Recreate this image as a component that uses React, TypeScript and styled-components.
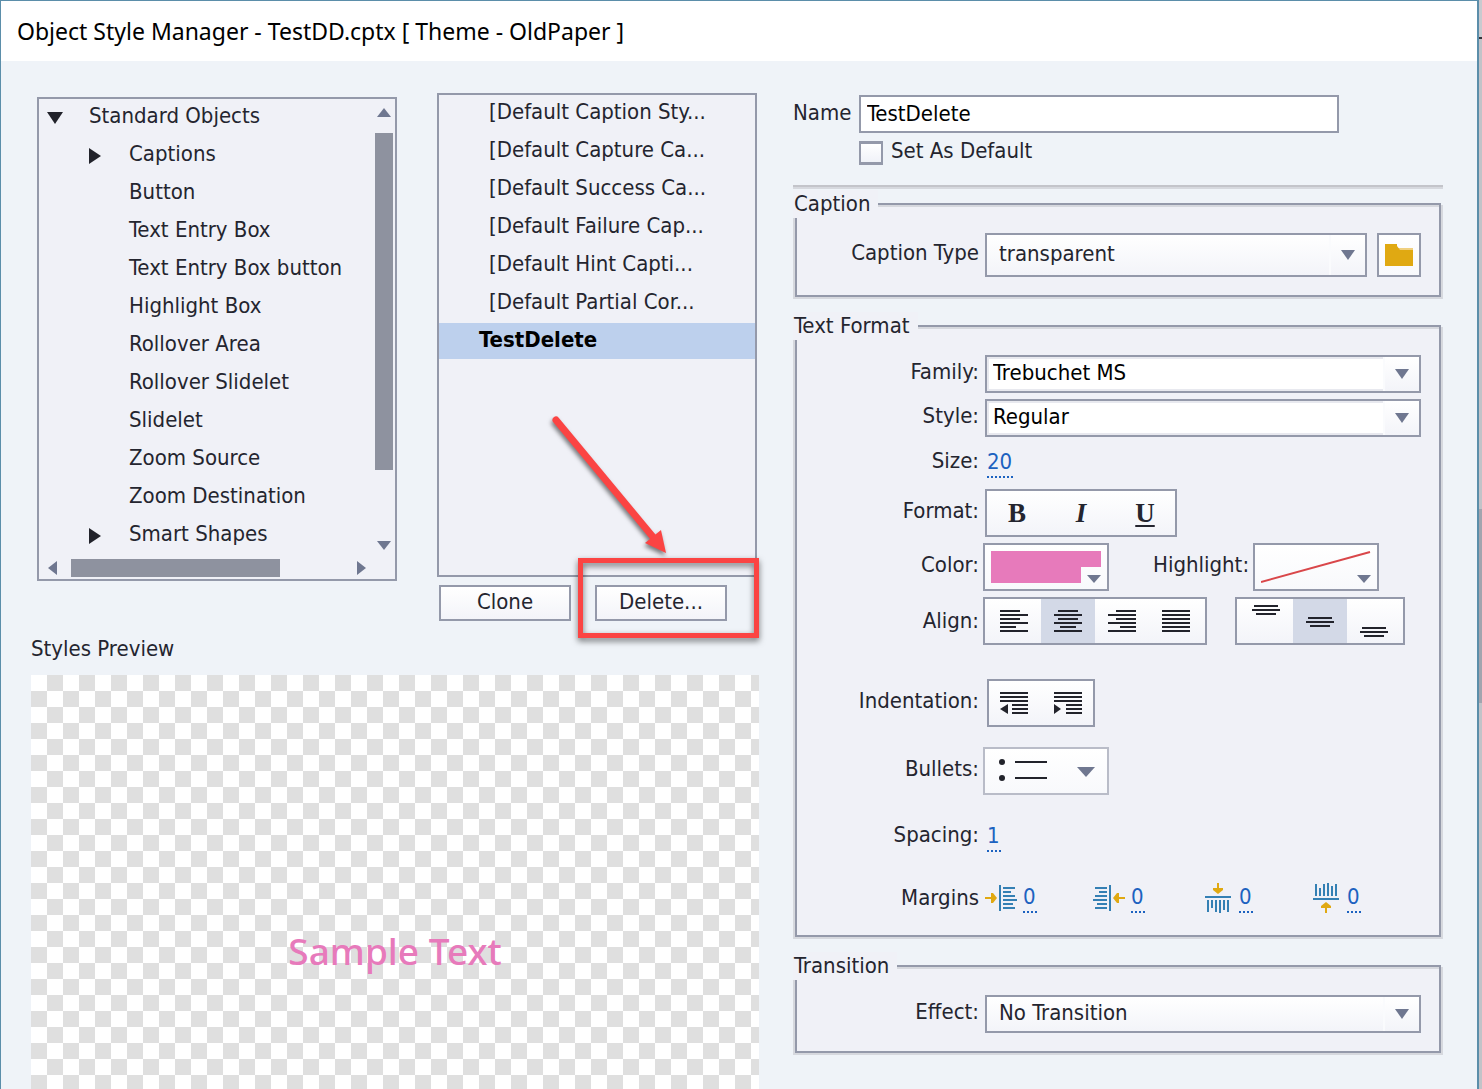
import React, { useState } from 'react';
import styled, { createGlobalStyle } from 'styled-components';

const color = {
  edge: '#5b8eaa',
  line: '#9499aa',
  soft: '#d6d8de',
  panel: '#f0f1f7',
  body: '#eff3f8',
  text: '#24252f',
  arrow: '#6f7790',
  thumb: '#8e929f',
  select: '#bdd0ed',
  pressed: '#d3d9e7',
  link: '#1c62c0',
  pink: '#e77abb',
  red: '#fb4443',
  gold: '#e0a912',
};

const uiFont = '"DejaVu Sans Condensed", "Noto Sans", sans-serif';

const GlobalStyle = createGlobalStyle`
  *, *::before, *::after { box-sizing: border-box; }
  body { margin: 0; background: #c2c3c8; }
  button, input, select { font: inherit; color: inherit; margin: 0; }
  svg { display: block; flex: none; }
`;

/* ---------- window frame ---------- */

const Screen = styled.div`
  display: flex;
  min-height: 100vh;
  font: 22px/28px ${uiFont};
  color: ${color.text};
`;

const Dialog = styled.main`
  flex: 1;
  min-width: 0;
  display: flex;
  flex-direction: column;
  background: ${color.body};
  border: solid ${color.edge};
  border-width: 1px 2px 0 1px;
`;

const Behind = styled.div`
  width: 3px;
  background: linear-gradient(
    #c8cacf 37px, #33343a 37px, #33343a 39px, #c2c3c8 39px,
    #c2c3c8 509px, #a2a4ae 509px, #a2a4ae 703px, #c2c3c8 703px
  );
`;

const TitleBar = styled.h1`
  margin: 0;
  padding: 0 16px;
  background: #fff;
  color: #000;
  font: 400 23px/60px "Noto Sans", sans-serif;
`;

const Columns = styled.div`
  flex: 1;
  display: grid;
  grid-template-columns: minmax(0, 728fr) minmax(0, 650fr);
  column-gap: 34px;
  padding: 32px 34px 0 30px;
`;

const LeftColumn = styled.div`
  display: flex;
  flex-direction: column;
`;

const Lists = styled.div`
  display: grid;
  grid-template-columns: minmax(0, 360fr) minmax(0, 320fr);
  column-gap: 40px;
  padding: 0 2px 0 6px;
  align-items: start;
`;

/* ---------- object tree ---------- */

const Tree = styled.div`
  display: grid;
  grid-template-columns: minmax(0, 1fr) 18px;
  grid-template-rows: minmax(0, 1fr) 18px;
  height: 484px;
  margin-top: 4px;
  padding: 0 2px 2px 0;
  border: 2px solid ${color.line};
  background: ${color.panel};
`;

const TreeItems = styled.ul`
  display: flex;
  flex-direction: column;
  gap: 2px;
  margin: 0;
  padding: 0;
  list-style: none;
  overflow: hidden;
  white-space: nowrap;
`;

const TreeRow = styled.li<{ $level: number }>`
  display: grid;
  grid-template-columns: 40px 1fr;
  align-items: center;
  flex: none;
  height: 36px;
  padding-left: ${p => 10 + p.$level * 40}px;
  padding-bottom: 2px;
`;

const Toggle = styled.button`
  display: flex;
  align-items: center;
  justify-content: center;
  width: 12px;
  height: 24px;
  padding: 4px 0 0;
  border: 0;
  background: none;
`;

const ScrollBar = styled.div<{ $across?: boolean }>`
  display: flex;
  flex-direction: ${p => (p.$across ? 'row' : 'column')};
`;

const ScrollArrow = styled.button<{ $across?: boolean; $end?: boolean }>`
  display: flex;
  flex: 0 0 ${p => (p.$across ? 32 : 34)}px;
  flex-direction: ${p => (p.$across ? 'row' : 'column')};
  align-items: center;
  justify-content: ${p => (p.$end ? 'flex-end' : 'flex-start')};
  padding: ${p => (p.$across ? '0 9px' : '9px 0')};
  border: 0;
  background: none;
`;

const Track = styled.div<{ $across?: boolean }>`
  flex: 1;
  display: flex;
  flex-direction: ${p => (p.$across ? 'row' : 'column')};
`;

const Thumb = styled.div<{ $share: number }>`
  flex: 0 0 ${p => p.$share}%;
  background: ${color.thumb};
`;

/* ---------- style list ---------- */

const StyleList = styled.ul`
  display: flex;
  flex-direction: column;
  gap: 2px;
  height: 484px;
  margin: 0;
  padding: 0;
  list-style: none;
  border: 2px solid ${color.line};
  background: ${color.panel};
  white-space: nowrap;
  overflow: hidden;
`;

const StyleItem = styled.li<{ $current?: boolean }>`
  height: 36px;
  padding-left: ${p => (p.$current ? 40 : 50)}px;
  line-height: 34px;
  ${p => p.$current && `background: ${color.select}; color: #000; font-weight: 700;`}
`;

const Actions = styled.div`
  display: flex;
  gap: 24px;
  padding: 8px 2px 0;
`;

const PushButton = styled.button`
  width: 132px;
  height: 36px;
  padding: 0 0 2px;
  border: 2px solid ${color.line};
  background: linear-gradient(#fff, #f3f4f9);
`;

const Marked = styled.div`
  position: relative;
`;

const MarkBox = styled.div`
  position: absolute;
  left: -17px;
  top: -27px;
  width: 181px;
  height: 80px;
  border: 5px solid ${color.red};
  filter: drop-shadow(0 3px 3px rgba(0, 0, 0, 0.55));
  pointer-events: none;
`;

const MarkArrow = styled.svg`
  position: absolute;
  left: -55px;
  top: -175px;
  filter: drop-shadow(-1px 3px 2px rgba(0, 0, 0, 0.5));
  pointer-events: none;
`;

/* ---------- preview ---------- */

const PreviewTitle = styled.h2`
  margin: 14px 0 12px;
  font: inherit;
`;

const Preview = styled.div`
  flex: 1;
  padding-top: 248px;
  background: repeating-conic-gradient(#dfdfdf 0 25%, #fff 0 50%) 0 0 / 32px 32px;
  color: ${color.pink};
  font: 500 37px/56px "Noto Sans", sans-serif;
  text-align: center;
`;

/* ---------- properties ---------- */

const Properties = styled.form`
  display: flex;
  flex-direction: column;
  padding-top: 2px;
`;

const NameRow = styled.div`
  display: flex;
  padding-right: 104px;
`;

const NameLabel = styled.label`
  width: 66px;
  line-height: 36px;
`;

const NameInput = styled.input`
  flex: 1;
  min-width: 0;
  height: 38px;
  padding: 0 6px 2px;
  border: 2px solid ${color.line};
  border-radius: 0;
  background: #fff;
  color: #000;
`;

const DefaultRow = styled.div`
  display: flex;
  gap: 8px;
  height: 24px;
  margin: 8px 0 20px 66px;
  line-height: 20px;
`;

const Check = styled.input`
  appearance: none;
  width: 24px;
  height: 24px;
  border: solid ${color.line};
  border-width: 3px 2px;
  background: linear-gradient(#fff, #f0f2f8);
`;

const Divider = styled.hr`
  width: 100%;
  height: 4px;
  margin: 0 0 1px;
  border: solid;
  border-width: 2px 0;
  border-color: #c3c4ca ${color.soft} ${color.soft};
`;

const Group = styled.fieldset`
  min-width: 0;
  margin: 0 2px 15px;
  padding: 15px 18px 18px 0;
  border: 2px solid ${color.line};
  background: ${color.panel};
  box-shadow: 2px 2px 0 ${color.soft}, -2px 2px 0 ${color.soft}, inset 0 2px 0 ${color.soft};
`;

const Legend = styled.legend`
  margin-left: -4px;
  padding: 0 8px 0 1px;
  background: ${color.panel};
`;

const Row = styled.div<{ $lead: number; $space?: number; $min?: number }>`
  display: grid;
  grid-template-columns: 182px minmax(0, 1fr);
  column-gap: ${p => p.$lead}px;
  align-items: center;
  min-height: ${p => p.$min ?? 38}px;
  margin-top: ${p => p.$space ?? 0}px;
`;

const RowLabel = styled.label<{ $level?: boolean }>`
  padding-bottom: ${p => (p.$level ? 0 : 4)}px;
  text-align: right;
  white-space: nowrap;
`;

const SideLabel = styled(RowLabel)`
  margin: 0 4px 0 44px;
`;

const Controls = styled.div<{ $gap?: number }>`
  display: flex;
  align-items: center;
  gap: ${p => p.$gap ?? 0}px;
`;

const SelectBox = styled.div<{ $height: number; $field?: boolean }>`
  position: relative;
  flex: 1;
  min-width: 0;
  height: ${p => p.$height}px;
  border: 2px solid ${color.line};
  background: linear-gradient(#fff, #f3f4f9);

  select {
    appearance: none;
    width: 100%;
    height: 100%;
    padding: 0 38px 2px ${p => (p.$field ? 6 : 12)}px;
    border: 0;
    border-radius: 0;
    background: ${p => (p.$field ? '#fff' : 'transparent')};
    box-shadow: ${p => (p.$field ? 'inset 0 0 0 2px #e8e9ef' : 'none')};
    ${p => p.$field && 'color: #000;'}
  }
`;

const DropArrow = styled.span`
  position: absolute;
  top: 0;
  right: 0;
  display: flex;
  align-items: center;
  justify-content: center;
  width: 36px;
  height: 100%;
  border-left: 2px solid #fafbfd;
  background: linear-gradient(#fff, #f3f4f9);
  pointer-events: none;
`;

const IconButton = styled.button<{ $width: number; $pale?: boolean }>`
  display: flex;
  align-items: center;
  justify-content: center;
  width: ${p => p.$width}px;
  height: ${p => (p.$width > 50 ? 48 : 44)}px;
  padding: 0;
  border: 2px solid ${p => (p.$pale ? '#b9bcc8' : color.line)};
  background: linear-gradient(#fff, #f8f9fc);
`;

const ToolGroup = styled.div<{ $spread?: boolean }>`
  display: flex;
  gap: ${p => (p.$spread ? 4 : 0)}px;
  height: 48px;
  padding: 0 ${p => (p.$spread ? 0 : 2)}px;
  border: 2px solid ${color.line};
  background: linear-gradient(#fff, #f3f4f9);
`;

const Tool = styled.button<{ $width: number; $on?: boolean }>`
  display: flex;
  align-items: center;
  justify-content: center;
  width: ${p => p.$width}px;
  padding: 0;
  border: 0;
  background: ${p => (p.$on ? color.pressed : 'transparent')};
`;

const Letter = styled.span<{ $kind: 'B' | 'I' | 'U' }>`
  font: 700 27px/36px "Liberation Serif", serif;
  font-style: ${p => (p.$kind === 'I' ? 'italic' : 'normal')};
  text-decoration: ${p => (p.$kind === 'U' ? 'underline 2px' : 'none')};
  text-underline-offset: 3px;
`;

const HotText = styled.input<{ $wide?: boolean }>`
  width: ${p => (p.$wide ? 26 : 14)}px;
  height: 30px;
  padding: 0 0 4px;
  border: 0;
  border-radius: 0;
  color: ${color.link};
  background: repeating-linear-gradient(90deg, ${color.link} 0 2px, transparent 2px 4px) left bottom / 100% 2px no-repeat;
`;

const Margin = styled.div`
  display: flex;
  align-items: center;
  gap: 6px;
  width: 108px;
`;

/* ---------- drawings ---------- */

type Dir = 'up' | 'down' | 'left' | 'right';

const shapes: Record<Dir, (l: number, d: number) => string> = {
  up: (l, d) => `0,${d} ${l},${d} ${l / 2},0`,
  down: (l, d) => `0,0 ${l},0 ${l / 2},${d}`,
  left: (l, d) => `${d},0 ${d},${l} 0,${l / 2}`,
  right: (l, d) => `0,0 0,${l} ${d},${l / 2}`,
};

function Triangle({ dir, long, deep, fill = color.arrow }: { dir: Dir; long: number; deep: number; fill?: string }) {
  const upright = dir === 'up' || dir === 'down';
  return (
    <svg width={upright ? long : deep} height={upright ? deep : long} aria-hidden="true">
      <polygon points={shapes[dir](long, deep)} fill={fill} />
    </svg>
  );
}

type Bar = [number, number];

function Bars({ rows, top = 0, height = 22 }: { rows: Bar[]; top?: number; height?: number }) {
  return (
    <svg width="28" height={height} aria-hidden="true">
      {rows.map(([from, to], i) => (
        <rect key={i} x={from} y={top + i * 4} width={to - from} height="2" fill="#22232b" />
      ))}
    </svg>
  );
}

const alignBars: { name: string; rows: Bar[] }[] = [
  { name: 'Align left', rows: [[0, 20], [0, 28], [0, 20], [0, 28], [0, 16], [0, 28]] },
  { name: 'Align centre', rows: [[4, 24], [0, 28], [4, 24], [0, 28], [6, 22], [0, 28]] },
  { name: 'Align right', rows: [[8, 28], [0, 28], [8, 28], [0, 28], [12, 28], [0, 28]] },
  { name: 'Justify', rows: [[0, 28], [0, 28], [0, 28], [0, 28], [0, 28], [0, 28]] },
];

const shortBars: Bar[] = [[2, 26], [0, 28], [4, 24]];
const verticals = [
  { name: 'Align top', top: 6 },
  { name: 'Align middle', top: 18 },
  { name: 'Align bottom', top: 28 },
];

function IndentIcon({ dir }: { dir: 'left' | 'right' }) {
  return (
    <svg width="28" height="22" fill="#22232b" aria-hidden="true">
      {[0, 4, 8].map(y => <rect key={y} y={y} width="28" height="2" />)}
      {[12, 16, 20].map(y => <rect key={y} x="12" y={y} width="16" height="2" />)}
      <polygon points={dir === 'left' ? '8,12 8,22 0,17' : '0,12 0,22 7,17'} />
    </svg>
  );
}

type Side = 'left' | 'right' | 'top' | 'bottom';
const turns: Record<Side, string> = {
  left: '',
  right: 'matrix(-1 0 0 1 32 0)',
  top: 'matrix(0 1 1 0 2 -1)',
  bottom: 'matrix(0 -1 1 0 2 31)',
};

function MarginIcon({ side }: { side: Side }) {
  return (
    <svg width="32" height="30" aria-hidden="true">
      <g transform={turns[side]}>
        <path d="M0 14h6v-4h2l4 5-4 5H6v-4H0z" fill={color.gold} />
        <g fill="#3480b4">
          <rect x="14" y="2" width="2" height="26" />
          {[12, 8, 12, 14, 10, 12].map((w, i) => (
            <rect key={i} x="18" y={4 + i * 4} width={w} height="2" />
          ))}
        </g>
      </g>
    </svg>
  );
}

/* ---------- parts ---------- */

const treeItems: { text: string; level: number; toggle?: 'down' | 'right' }[] = [
  { text: 'Standard Objects', level: 0, toggle: 'down' },
  { text: 'Captions', level: 1, toggle: 'right' },
  { text: 'Button', level: 1 },
  { text: 'Text Entry Box', level: 1 },
  { text: 'Text Entry Box button', level: 1 },
  { text: 'Highlight Box', level: 1 },
  { text: 'Rollover Area', level: 1 },
  { text: 'Rollover Slidelet', level: 1 },
  { text: 'Slidelet', level: 1 },
  { text: 'Zoom Source', level: 1 },
  { text: 'Zoom Destination', level: 1 },
  { text: 'Smart Shapes', level: 1, toggle: 'right' },
];

const styleNames = [
  '[Default Caption Sty...',
  '[Default Capture Ca...',
  '[Default Success Ca...',
  '[Default Failure Cap...',
  '[Default Hint Capti...',
  '[Default Partial Cor...',
];

function Dropdown({ id, value, height = 38, field }: { id: string; value: string; height?: number; field?: boolean }) {
  return (
    <SelectBox $height={height} $field={field}>
      <select id={id} defaultValue={value}>
        <option>{value}</option>
      </select>
      <DropArrow>
        <Triangle dir="down" long={14} deep={10} />
      </DropArrow>
    </SelectBox>
  );
}

function ObjectTree() {
  return (
    <Tree>
      <TreeItems>
        {treeItems.map(item => (
          <TreeRow key={item.text} $level={item.level}>
            {item.toggle ? (
              <Toggle type="button" aria-label={`Toggle ${item.text}`}>
                <Triangle dir={item.toggle} long={16} deep={12} fill="#22232b" />
              </Toggle>
            ) : (
              <span />
            )}
            <span>{item.text}</span>
          </TreeRow>
        ))}
      </TreeItems>
      <ScrollBar>
        <ScrollArrow type="button" aria-label="Scroll up"><Triangle dir="up" long={14} deep={9} /></ScrollArrow>
        <Track><Thumb $share={86} /></Track>
        <ScrollArrow type="button" $end aria-label="Scroll down"><Triangle dir="down" long={14} deep={9} /></ScrollArrow>
      </ScrollBar>
      <ScrollBar $across>
        <ScrollArrow type="button" $across aria-label="Scroll left"><Triangle dir="left" long={14} deep={9} /></ScrollArrow>
        <Track $across><Thumb $share={77} /></Track>
        <ScrollArrow type="button" $across $end aria-label="Scroll right"><Triangle dir="right" long={14} deep={9} /></ScrollArrow>
      </ScrollBar>
    </Tree>
  );
}

export default function App() {
  const [align, setAlign] = useState(1);
  const [vertical, setVertical] = useState(1);

  return (
    <Screen>
      <GlobalStyle />
      <Dialog>
        <TitleBar>Object Style Manager - TestDD.cptx [ Theme - OldPaper ]</TitleBar>
        <Columns>
          <LeftColumn>
            <Lists>
              <ObjectTree />
              <div>
                <StyleList>
                  {styleNames.map(name => <StyleItem key={name}>{name}</StyleItem>)}
                  <StyleItem $current>TestDelete</StyleItem>
                </StyleList>
                <Actions>
                  <PushButton type="button">Clone</PushButton>
                  <Marked>
                    <PushButton type="button">Delete...</PushButton>
                    <MarkBox />
                    <MarkArrow width="136" height="150" aria-hidden="true">
                      <path d="M16 10L113 127" stroke={color.red} strokeWidth="7" strokeLinecap="round" />
                      <polygon points="126,143 105,133 121,120" fill={color.red} />
                    </MarkArrow>
                  </Marked>
                </Actions>
              </div>
            </Lists>
            <PreviewTitle>Styles Preview</PreviewTitle>
            <Preview>Sample Text</Preview>
          </LeftColumn>

          <Properties onSubmit={e => e.preventDefault()}>
            <NameRow>
              <NameLabel htmlFor="name">Name</NameLabel>
              <NameInput id="name" defaultValue="TestDelete" />
            </NameRow>
            <DefaultRow>
              <Check id="default" type="checkbox" />
              <label htmlFor="default">Set As Default</label>
            </DefaultRow>
            <Divider />

            <Group>
              <Legend>Caption</Legend>
              <Row $lead={6}>
                <RowLabel htmlFor="caption-type">Caption Type</RowLabel>
                <Controls $gap={10}>
                  <Dropdown id="caption-type" value="transparent" height={44} />
                  <IconButton type="button" $width={44} aria-label="Browse">
                    <svg width="28" height="22" aria-hidden="true">
                      <rect x="13" y="4" width="15" height="2" fill="#f0d080" />
                      <path d="M0 0h12v2l3 4h13v16H0z" fill={color.gold} />
                    </svg>
                  </IconButton>
                </Controls>
              </Row>
            </Group>

            <Group>
              <Legend>Text Format</Legend>
              <Row $lead={6}>
                <RowLabel htmlFor="family">Family:</RowLabel>
                <Dropdown id="family" value="Trebuchet MS" field />
              </Row>
              <Row $lead={6} $space={6}>
                <RowLabel htmlFor="style">Style:</RowLabel>
                <Dropdown id="style" value="Regular" field />
              </Row>
              <Row $lead={8} $space={6} $min={40}>
                <RowLabel htmlFor="size">Size:</RowLabel>
                <HotText id="size" defaultValue="20" $wide />
              </Row>
              <Row $lead={6} $space={6}>
                <RowLabel as="span">Format:</RowLabel>
                <Controls>
                  <ToolGroup $spread>
                    {(['B', 'I', 'U'] as const).map(k => (
                      <Tool key={k} type="button" $width={60}><Letter $kind={k}>{k}</Letter></Tool>
                    ))}
                  </ToolGroup>
                </Controls>
              </Row>
              <Row $lead={4} $space={6}>
                <RowLabel htmlFor="text-color">Color:</RowLabel>
                <Controls>
                  <IconButton id="text-color" type="button" $width={126}>
                    <svg width="110" height="32" aria-hidden="true">
                      <path d="M0 0h110v16H90v16H0z" fill={color.pink} />
                      <polygon points="96,24 110,24 103,32" fill={color.arrow} />
                    </svg>
                  </IconButton>
                  <SideLabel htmlFor="highlight">Highlight:</SideLabel>
                  <IconButton id="highlight" type="button" $width={126}>
                    <svg width="110" height="32" aria-hidden="true">
                      <path d="M0 31L109 1" stroke="#d9474a" strokeWidth="2" />
                      <polygon points="96,24 110,24 103,32" fill={color.arrow} />
                    </svg>
                  </IconButton>
                </Controls>
              </Row>
              <Row $lead={4} $space={6}>
                <RowLabel as="span" $level>Align:</RowLabel>
                <Controls $gap={28}>
                  <ToolGroup>
                    {alignBars.map((a, i) => (
                      <Tool key={a.name} type="button" $width={54} $on={align === i} aria-label={a.name} onClick={() => setAlign(i)}>
                        <Bars rows={a.rows} />
                      </Tool>
                    ))}
                  </ToolGroup>
                  <ToolGroup>
                    {verticals.map((v, i) => (
                      <Tool key={v.name} type="button" $width={54} $on={vertical === i} aria-label={v.name} onClick={() => setVertical(i)}>
                        <Bars rows={shortBars} top={v.top} height={44} />
                      </Tool>
                    ))}
                  </ToolGroup>
                </Controls>
              </Row>
              <Row $lead={8} $space={34}>
                <RowLabel as="span">Indentation:</RowLabel>
                <Controls>
                  <ToolGroup $spread>
                    <Tool type="button" $width={50} aria-label="Decrease indent"><IndentIcon dir="left" /></Tool>
                    <Tool type="button" $width={50} aria-label="Increase indent"><IndentIcon dir="right" /></Tool>
                  </ToolGroup>
                </Controls>
              </Row>
              <Row $lead={4} $space={20}>
                <RowLabel htmlFor="bullets">Bullets:</RowLabel>
                <IconButton id="bullets" type="button" $width={126} $pale>
                  <svg width="98" height="24" fill="#22232b" aria-hidden="true">
                    <circle cx="5" cy="3" r="3" />
                    <circle cx="5" cy="19" r="3" />
                    <rect x="18" y="2" width="32" height="2" />
                    <rect x="18" y="18" width="32" height="2" />
                    <polygon points="80,8 98,8 89,18" fill={color.arrow} />
                  </svg>
                </IconButton>
              </Row>
              <Row $lead={8} $space={22} $min={40}>
                <RowLabel htmlFor="spacing">Spacing:</RowLabel>
                <HotText id="spacing" defaultValue="1" />
              </Row>
              <Row $lead={6} $space={22}>
                <RowLabel as="span" $level>Margins</RowLabel>
                <Controls>
                  {(['left', 'right', 'top', 'bottom'] as const).map(side => (
                    <Margin key={side}>
                      <MarginIcon side={side} />
                      <HotText aria-label={`${side} margin`} defaultValue="0" />
                    </Margin>
                  ))}
                </Controls>
              </Row>
            </Group>

            <Group>
              <Legend>Transition</Legend>
              <Row $lead={6}>
                <RowLabel htmlFor="effect">Effect:</RowLabel>
                <Dropdown id="effect" value="No Transition" />
              </Row>
            </Group>
          </Properties>
        </Columns>
      </Dialog>
      <Behind />
    </Screen>
  );
}
